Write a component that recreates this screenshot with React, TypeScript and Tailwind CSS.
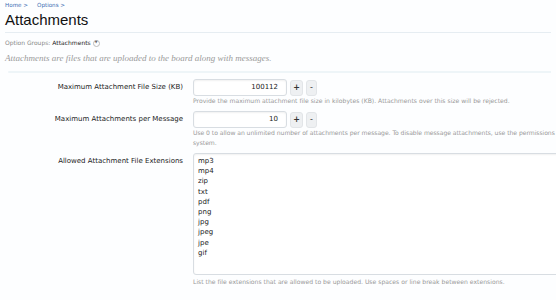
import React from "react";

const exts = ["mp3", "mp4", "zip", "txt", "pdf", "png", "jpg", "jpeg", "jpe", "gif"];

function Spin({ value }: { value: string }) {
  return (
    <div className="flex items-center gap-[3px]">
      <div className="w-[94px] h-[17px] bg-white border border-[#d8dde2] rounded-[3px] shadow-[inset_0_1px_2px_rgba(0,0,0,0.06)] flex items-center justify-end pr-[8px] text-[7px] text-[#222]">
        {value}
      </div>
      <div className="w-[13px] h-[16px] rounded-[3px] bg-[#eef0f2] border border-[#e2e5e8] flex items-center justify-center text-[8px] font-bold text-[#333] leading-none">+</div>
      <div className="w-[11px] h-[16px] rounded-[3px] bg-[#eef0f2] border border-[#e2e5e8] flex items-center justify-center text-[8px] text-[#333] leading-none">-</div>
    </div>
  );
}

export default function App() {
  return (
    <div className="w-[556px] h-[300px] overflow-hidden bg-[#fdfeff] text-[#222]" style={{ fontFamily: '"DejaVu Sans", sans-serif' }}>
      <div className="px-[5px]">
        <div className="pt-[1px] text-[5.6px] leading-[8px] text-[#3a6db3] flex gap-[9px]">
          <span>Home &gt;</span>
          <span>Options &gt;</span>
        </div>
        <h1 className="text-[15px] leading-[20px] mt-[1px] text-[#111]" style={{ fontFamily: '"Liberation Sans", sans-serif' }}>Attachments</h1>
        <div className="mt-[2px] border-b border-[#e6edf2]" />
        <div className="mt-[5px] text-[6px] leading-[10px] text-[#888] flex items-center gap-[2px]">
          <span>Option Groups:</span>
          <span className="text-[#222]">Attachments</span>
          <span className="w-[7px] h-[7px] rounded-full border border-[#bbb] flex items-center justify-center text-[#666] text-[3.5px] leading-none">▼</span>
        </div>
        <div className="mt-[4px] italic text-[9px] leading-[12px] text-[#9a9a9a]" style={{ fontFamily: '"Liberation Serif", serif' }}>
          Attachments are files that are uploaded to the board along with messages.
        </div>
        <div className="mt-[7px] ml-[3px] h-[2px] rounded-l-full bg-[#eef5f8]" />
      </div>

      <div className="mt-[6px] grid grid-cols-[183px_372px] gap-x-[10px]">
        <div className="text-right text-[7px] leading-[17px]">Maximum Attachment File Size (KB)</div>
        <div>
          <Spin value="100112" />
          <div className="text-[6.1px] leading-[10px] text-[#999]">
            Provide the maximum attachment file size in kilobytes (KB). Attachments over this size will be rejected.
          </div>
        </div>

        <div className="mt-[5px] text-right text-[7px] leading-[17px]">Maximum Attachments per Message</div>
        <div className="mt-[5px]">
          <Spin value="10" />
          <div className="text-[6.1px] leading-[10px] text-[#999] tracking-[-0.05px] w-[362px]">
            Use 0 to allow an unlimited number of attachments per message. To disable message attachments, use the permissions system.
          </div>
        </div>

        <div className="mt-[5px] text-right text-[7px] leading-[17px]">Allowed Attachment File Extensions</div>
        <div className="mt-[5px]">
          <div className="w-[380px] h-[122px] bg-white border border-[#d8dde2] rounded-[3px] shadow-[inset_0_1px_2px_rgba(0,0,0,0.06)] pl-[4px] pt-[2px] text-[7px] leading-[10.2px] text-[#222]">
            {exts.map((e) => (
              <div key={e}>{e}</div>
            ))}
          </div>
          <div className="mt-[2px] text-[6.1px] leading-[10px] text-[#999]">
            List the file extensions that are allowed to be uploaded. Use spaces or line break between extensions.
          </div>
        </div>
      </div>
    </div>
  );
}
